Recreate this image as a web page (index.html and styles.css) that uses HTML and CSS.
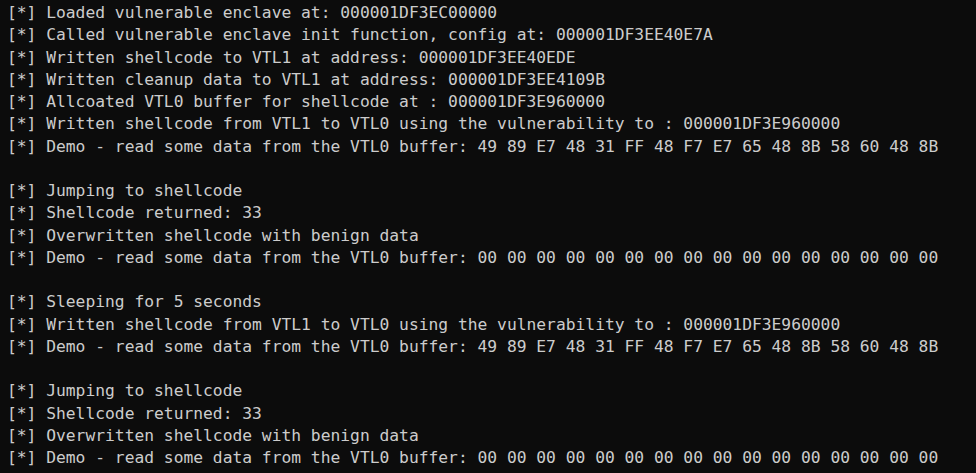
FILE: index.html
```html
<!DOCTYPE html>
<html>
<head>
<meta charset="utf-8">
<link rel="stylesheet" href="styles.css">
</head>
<body>
<pre class="term">[*] Loaded vulnerable enclave at: 000001DF3EC00000
[*] Called vulnerable enclave init function, config at: 000001DF3EE40E7A
[*] Written shellcode to VTL1 at address: 000001DF3EE40EDE
[*] Written cleanup data to VTL1 at address: 000001DF3EE4109B
[*] Allcoated VTL0 buffer for shellcode at : 000001DF3E960000
[*] Written shellcode from VTL1 to VTL0 using the vulnerability to : 000001DF3E960000
[*] Demo - read some data from the VTL0 buffer: 49 89 E7 48 31 FF 48 F7 E7 65 48 8B 58 60 48 8B

[*] Jumping to shellcode
[*] Shellcode returned: 33
[*] Overwritten shellcode with benign data
[*] Demo - read some data from the VTL0 buffer: 00 00 00 00 00 00 00 00 00 00 00 00 00 00 00 00

[*] Sleeping for 5 seconds
[*] Written shellcode from VTL1 to VTL0 using the vulnerability to : 000001DF3E960000
[*] Demo - read some data from the VTL0 buffer: 49 89 E7 48 31 FF 48 F7 E7 65 48 8B 58 60 48 8B

[*] Jumping to shellcode
[*] Shellcode returned: 33
[*] Overwritten shellcode with benign data
[*] Demo - read some data from the VTL0 buffer: 00 00 00 00 00 00 00 00 00 00 00 00 00 00 00 00</pre>
</body>
</html>
```
FILE: styles.css
```css
html, body {
  margin: 0;
  padding: 0;
  background: #0c0c0c;
  height: 100%;
  overflow: hidden;
}
.term {
  margin: 0;
  padding: 2px 0 0 7px;
  font-family: "DejaVu Sans Mono", "Liberation Mono", monospace;
  font-size: 16.3px;
  line-height: 22.25px;
  color: #cccccc;
  white-space: pre;
}
```
